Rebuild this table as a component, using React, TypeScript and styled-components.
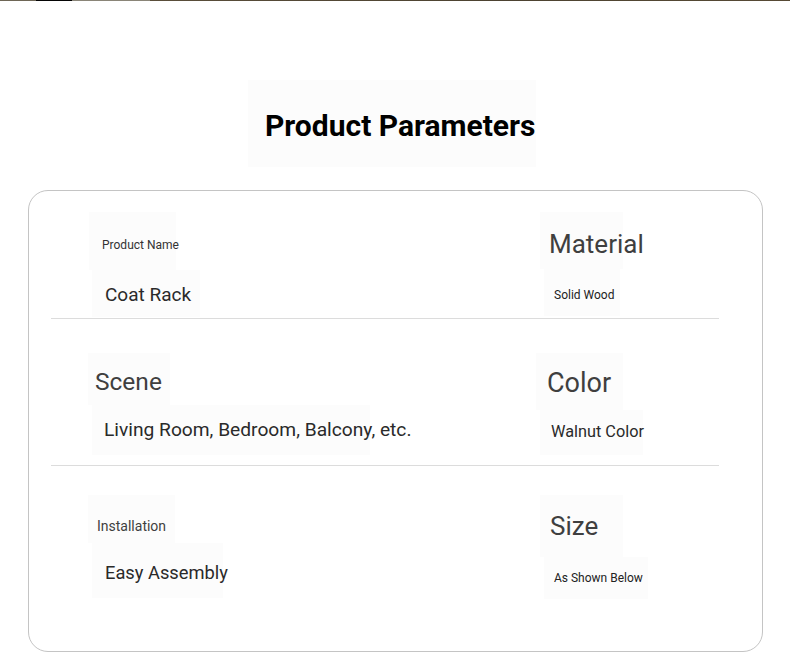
import styled, { createGlobalStyle } from "styled-components";

const GlobalStyle = createGlobalStyle`
  html, body {
    margin: 0;
    padding: 0;
    background: #ffffff;
  }
  body {
    font-family: Roboto, "Liberation Sans", Arial, sans-serif;
    width: 790px;
    overflow: hidden;
  }
`;

interface CellProps {
  $w: number;
  $h: number;
  $ml: number;
  $pl: number;
  $pt: number;
  $fs: number;
  $color?: string;
}

interface ParamCell {
  text: string;
  w: number;
  h: number;
  ml: number;
  pl: number;
  pt?: number;
  fs: number;
  color?: string;
}

interface ParamRow {
  pt: number;
  pb: number;
  left: ParamCell[];
  right: ParamCell[];
}

const rows: ParamRow[] = [
  {
    pt: 21,
    pb: 1,
    left: [
      { text: "Product Name", w: 87, h: 58, ml: 38, pl: 13, pt: 7, fs: 12, color: "#333" },
      { text: "Coat Rack", w: 108, h: 47, ml: 41, pl: 13, pt: 1, fs: 19, color: "#2a2a2a" },
    ],
    right: [
      { text: "Material", w: 83, h: 57, ml: 4, pl: 9, pt: 6, fs: 26, color: "#3f3f3f" },
      { text: "Solid Wood", w: 76, h: 47, ml: 8, pl: 10, pt: 4, fs: 12, color: "#222" },
    ],
  },
  {
    pt: 34,
    pb: 10,
    left: [
      { text: "Scene", w: 82, h: 52, ml: 37, pl: 7, pt: 6, fs: 24.5, color: "#3f3f3f" },
      { text: "Living Room, Bedroom, Balcony, etc.", w: 278, h: 50, ml: 41, pl: 12, fs: 19.2, color: "#2a2a2a" },
    ],
    right: [
      { text: "Color", w: 87, h: 57, ml: 0, pl: 11, pt: 4, fs: 27, color: "#3f3f3f" },
      { text: "Walnut Color", w: 103, h: 45, ml: 4, pl: 11, fs: 16.3, color: "#2a2a2a" },
    ],
  },
  {
    pt: 29,
    pb: 52,
    left: [
      { text: "Installation", w: 87, h: 48, ml: 37, pl: 9, pt: 14, fs: 14, color: "#3f3f3f" },
      { text: "Easy Assembly", w: 131, h: 55, ml: 41, pl: 13, pt: 6, fs: 18.3, color: "#2a2a2a" },
    ],
    right: [
      { text: "Size", w: 83, h: 62, ml: 4, pl: 10, fs: 26, color: "#3f3f3f" },
      { text: "As Shown Below", w: 104, h: 42, ml: 8, pl: 10, fs: 12, color: "#222" },
    ],
  },
];

function Celulas({ cells }: { cells: ParamCell[] }) {
  return (
    <Coluna>
      {cells.map((c) => (
        <Celula
          key={c.text}
          $w={c.w}
          $h={c.h}
          $ml={c.ml}
          $pl={c.pl}
          $pt={c.pt ?? 0}
          $fs={c.fs}
          $color={c.color}
        >
          {c.text}
        </Celula>
      ))}
    </Coluna>
  );
}

export default function App() {
  return (
    <>
      <GlobalStyle />
      <Pagina>
        <FaixaImagem />
        <TituloBox>
          <Titulo>Product Parameters</Titulo>
        </TituloBox>
        <Cartao>
          {rows.map((row, i) => (
            <Linha key={i} $pt={row.pt} $pb={row.pb} $last={i === rows.length - 1}>
              <Celulas cells={row.left} />
              <Celulas cells={row.right} />
            </Linha>
          ))}
        </Cartao>
      </Pagina>
    </>
  );
}

const Pagina = styled.div`
  width: 790px;
  height: 666px;
  display: flex;
  flex-direction: column;
  background: #ffffff;
`;

const FaixaImagem = styled.div`
  height: 1px;
  width: 100%;
  background: linear-gradient(
    to right,
    #6e6656 0,
    #6e6656 36px,
    #050505 36px,
    #050505 72px,
    #8a8578 72px,
    #8a8578 150px,
    #5a4e3a 150px,
    #4c4231 500px,
    #574a35 100%
  );
`;

const TituloBox = styled.div`
  align-self: flex-start;
  margin: 79px 0 0 248px;
  width: 288px;
  height: 87px;
  background: #fcfcfc;
  display: flex;
  align-items: center;
  padding-left: 17px;
  box-sizing: border-box;
`;

const Titulo = styled.h2`
  margin: 0;
  font-size: 30px;
  font-weight: 700;
  color: #000;
  white-space: nowrap;
  line-height: 1;
  padding-top: 4px;
`;

const Cartao = styled.div`
  margin: 23px 0 0 28px;
  width: 735px;
  height: 462px;
  box-sizing: border-box;
  border: 1px solid #c4c4c4;
  border-radius: 20px;
  padding: 0 43px 0 22px;
`;

const Linha = styled.div<{ $pt: number; $pb: number; $last: boolean }>`
  display: grid;
  grid-template-columns: 485px 1fr;
  padding-top: ${(p) => p.$pt}px;
  padding-bottom: ${(p) => p.$pb}px;
  border-bottom: ${(p) => (p.$last ? "none" : "1px solid #dcdcdc")};
`;

const Coluna = styled.div`
  display: flex;
  flex-direction: column;
  align-items: flex-start;
`;

const Celula = styled.div<CellProps>`
  width: ${(p) => p.$w}px;
  height: ${(p) => p.$h}px;
  margin-left: ${(p) => p.$ml}px;
  padding-left: ${(p) => p.$pl}px;
  padding-top: ${(p) => p.$pt}px;
  box-sizing: border-box;
  display: flex;
  align-items: center;
  background: #fcfcfc;
  font-size: ${(p) => p.$fs}px;
  font-weight: 400;
  color: ${(p) => p.$color ?? "#333"};
  white-space: nowrap;
  line-height: 1;
`;
